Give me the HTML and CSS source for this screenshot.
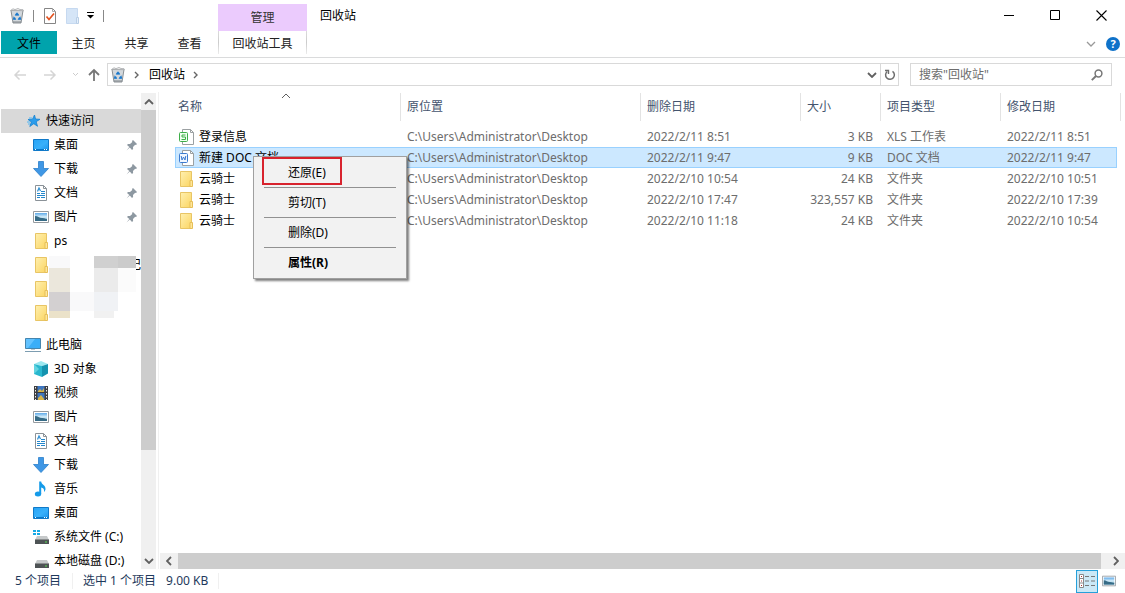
FILE: index.html
```html
<!DOCTYPE html>
<html lang="zh-CN">
<head>
<meta charset="utf-8">
<title>回收站</title>
<link rel="stylesheet" href="styles.css">
</head>
<body>
<svg class="sprite" aria-hidden="true">
  <defs>
    <linearGradient id="gFolder" x1="0" x2="1" y1="0" y2="1"><stop offset="0" stop-color="#fff0b0"/><stop offset="1" stop-color="#fbd562"/></linearGradient>
    <linearGradient id="gScreen" x1="0" x2="1" y1="0" y2="1"><stop offset="0" stop-color="#27a4f5"/><stop offset=".55" stop-color="#38b0fb"/><stop offset="1" stop-color="#1a94ec"/></linearGradient>
    <linearGradient id="gSky" x1="0" x2="0" y1="0" y2="1"><stop offset="0" stop-color="#5ea9e8"/><stop offset=".5" stop-color="#d8effa"/><stop offset="1" stop-color="#4f94b6"/></linearGradient>
    <symbol id="bin" viewBox="0 0 16 16"><path d="M2 2.500 4 15h8l2-12.500z" fill="#d3d8dc" stroke="#898f94"/><path d="M1.500 2.500 4 .8l2 .8 3-1.100 2 1 3 .2.5 1z" fill="#f1f1f1" stroke="#a4a7aa" stroke-width=".8"/><path d="M4 14h8" stroke="#7e8488"/><path d="M8 4.200 10.300 7.500H5.700zM4.700 8.200 7.300 11.800H3.800zM11.300 8.200 12.200 11.800H8.500z" fill="#1977cb"/><path d="m6.500 6.500 3 0M5 10.500l1.500 0M9.500 10.500h2" stroke="#1977cb" stroke-width="1.300"/></symbol>
    <symbol id="folder" viewBox="0 0 16 16"><path d="M2.500.5h11v15h-11z" fill="url(#gFolder)" stroke="#e8c565"/><path d="M12 9.500h2.500v6H12z" fill="#ffe69a" stroke="#e6bf58"/></symbol>
    <symbol id="star" viewBox="0 0 16 16"><path d="m9.500 2 1 4 4.500.3-3.800 2.400 1.300 4.600-3.700-2.600-4 2.800 1.600-4.600L3 6.500l4.500-.3z" fill="#2c9dec" stroke="#1683d1" stroke-width=".8"/><path d="M2 9h3M3 11h2M4 5h3" stroke="#53b6f4"/></symbol>
    <symbol id="desktop" viewBox="0 0 16 16"><path d="M.5 2.500h15v11H.5z" fill="url(#gScreen)" stroke="#1079c8"/><path d="M1 12.500h14" stroke="#0877c7"/><path d="M2 12.500h1M11 12.500h1M13 12.500h1" stroke="#fff"/></symbol>
    <symbol id="down" viewBox="0 0 16 16"><path d="M5.500.5h5v7h5L8 15.500.5 7.500h5z" fill="#3f97e5" stroke="#2b7fca" stroke-width=".8"/></symbol>
    <symbol id="doc" viewBox="0 0 16 16"><path d="M2.500.5h8l3 3v12h-11z" fill="#fff" stroke="#8b9298"/><path d="M10.500.5v3h3" fill="none" stroke="#8b9298"/><path d="m4.500 6.500 1.500-3.500 1.500 3" fill="none" stroke="#2e8fd3" stroke-width="1.200"/><path d="M8 6.500h4M4 8.500h3M8 8.500h4M4 10.500h8M4 12.500h3M8 12.500h4" stroke="#2387cc"/></symbol>
    <symbol id="picture" viewBox="0 0 16 16"><path d="M.5 2.500h15v11H.5z" fill="#fff" stroke="#969ca1"/><path d="M2 4h12v8H2z" fill="url(#gSky)"/><path d="M2 7c3 0 4 2 7 2s3 1 5 1v2H2z" fill="#366b86"/></symbol>
    <symbol id="pc" viewBox="0 0 16 16"><path d="M.5 1.500h15v10H.5z" fill="#3aaef8" stroke="#4585ae"/><path d="M1 2h9l-7 9H1z" fill="#62c2ff"/><path d="M6 12h4v1H6z" fill="#bac9d2"/><path d="M0 14.500h16" stroke="#7d9db1"/></symbol>
    <symbol id="cube" viewBox="0 0 16 16"><path d="m1 3 7-3 7 3-6 2z" fill="#9be8f0"/><path d="m1 3 8 2v11l-8-3z" fill="#28b7ce"/><path d="m9 5 6-2v9.500L9 16z" fill="#1493af"/><path d="m1 3 5 5-5 5z" fill="#62d4e0"/></symbol>
    <symbol id="film" viewBox="0 0 16 16"><path d="M1 1h14v14H1z" fill="#3e3e40"/><path d="M4.500 1h7v6h-7zM4.500 8h7v7h-7z" fill="#3e76c0"/><path d="m5 6 2-2 2 2 2-3v4H5zM5 13l3-3 3 4v1H5z" fill="#d9b548"/><path d="M2.500 2v13M13.500 2v13" stroke="#eee" stroke-dasharray="1.500 1.500"/></symbol>
    <symbol id="music" viewBox="0 0 16 16"><ellipse cx="5" cy="13" rx="3.200" ry="2.500" fill="#159be9"/><path d="M6.200 13V.5h2c0 3 4.800 3.500 4.300 8-.3 1-.8 2-1.500 2.500.5-3-.8-4-2.800-4.500V13z" fill="#159be9"/></symbol>
    <symbol id="drive" viewBox="0 0 16 16"><path d="m4 7-2 4h14l-2-4z" fill="#c6c9ca"/><path d="M2 10.500h14V15H2z" fill="#4e5355"/><path d="M12 13h2" stroke="#58e052"/></symbol>
    <symbol id="sysdrive" viewBox="0 0 16 16"><path d="m4 7-2 4h14l-2-4z" fill="#c6c9ca"/><path d="M2 10.500h14V15H2z" fill="#4e5355"/><path d="M0 1h3v2H0zM4 1h3v2H4zM0 4h3v2H0zM4 4h3v2H4z" fill="#16a9e5"/><path d="M12 13h2" stroke="#58e052"/></symbol>
    <symbol id="pin" viewBox="0 0 12 12"><path d="m7 1 4 4-1 1-.8-.2L7 8l.1 2L6 11 3.800 8.500.5 11.500 3.300 8 1 6l1-1 2 .1L6.300 3 6 2z" fill="#8d98a1"/></symbol>
    <symbol id="up" viewBox="0 0 10 6"><path d="m1 5 4-4 4 4" fill="none" stroke="currentColor" stroke-width="var(--weight, 1)"/></symbol>
    <symbol id="sheet" viewBox="0 0 16 16"><path d="M4.500.5h8l3 3v12h-11z" fill="#fff" stroke="#9ba0a2"/><path d="M12.500.5v3h3" fill="none" stroke="#9ba0a2"/><rect x="1.500" y="3.500" width="8" height="9" rx="1" fill="#f1fff1" stroke="#3eae49"/><path d="M7.500 6H4v2h3.500v2.500H3.500" fill="none" stroke="#3eae49"/></symbol>
    <symbol id="word" viewBox="0 0 16 16"><path d="M4.500.5h8l3 3v12h-11z" fill="#fff" stroke="#9ba0a2"/><path d="M12.500.5v3h3" fill="none" stroke="#9ba0a2"/><rect x="1.500" y="3.500" width="8" height="9" rx="1" fill="#f1f7ff" stroke="#3c7bd0"/><path d="m3.200 6 .8 4L5.500 7 7 10l.8-4" fill="none" stroke="#3c7bd0"/></symbol>
  </defs>
</svg>

<div class="window">
  <header>
    <div class="titlebar">
      <div class="quick">
        <svg class="icon"><use href="#bin"/></svg>
        <span class="divider"></span>
        <button aria-label="属性"><svg class="icon" viewBox="0 0 16 16"><path d="M2.500.5h8l3 3v12h-11z" fill="#fff" stroke="#858585"/><path d="M10.500.5v3h3" fill="none" stroke="#aaa"/><path d="m4.500 8.500 2.500 3 5-6" fill="none" stroke="#e35220" stroke-width="1.700"/></svg></button>
        <button aria-label="新建文件夹"><svg class="icon" viewBox="0 0 16 16"><path d="M2.500.5h11v15h-11z" fill="#d5e5f7" stroke="#c6d9f0"/><path d="M12.500 9.500h2v6h-2z" fill="#e5f0fb" stroke="#b9cee6"/></svg></button>
        <button class="customize" aria-label="自定义快速访问工具栏"><svg viewBox="0 0 9 7" width="9" height="7"><path d="M1 .5h7" stroke="#000"/><path d="M1 3h7L4.500 6.500z"/></svg></button>
        <span class="divider"></span>
      </div>
      <div class="context-group">管理</div>
      <div class="title">回收站</div>
      <div class="controls">
        <button aria-label="最小化"><svg viewBox="0 0 11 11" width="11" height="11"><path d="M0 5.500h10" stroke="#000"/></svg></button>
        <button aria-label="最大化"><svg viewBox="0 0 11 11" width="11" height="11"><path d="M.5.500h9v9h-9z" fill="none" stroke="#000"/></svg></button>
        <button aria-label="关闭"><svg viewBox="0 0 11 11" width="11" height="11"><path d="m.5.500 10 10M10.500.500l-10 10" stroke="#000" stroke-width="1.100"/></svg></button>
      </div>
    </div>
    <nav class="tabs" aria-label="功能区">
      <button class="tab file">文件</button>
      <button class="tab">主页</button>
      <button class="tab">共享</button>
      <button class="tab">查看</button>
      <button class="tab tools">回收站工具</button>
      <div class="ribbon-end">
        <button aria-label="展开功能区"><svg class="chev flip light"><use href="#up"/></svg></button>
        <button aria-label="帮助" class="help">?</button>
      </div>
    </nav>
  </header>

  <div class="navbar">
    <div class="history">
      <button aria-label="后退"><svg viewBox="0 0 14 12" width="14" height="12"><path d="M13 6H2M6.500 1.500 2 6l4.500 4.500" fill="none" stroke="#d5d5d5" stroke-width="1.500"/></svg></button>
      <button aria-label="前进"><svg viewBox="0 0 14 12" width="14" height="12"><path d="M0 6h11M6.500 1.500 11 6l-4.500 4.500" fill="none" stroke="#d5d5d5" stroke-width="1.500"/></svg></button>
      <button class="recent" aria-label="最近浏览的位置"><svg viewBox="0 0 7 5" width="7" height="5"><path d="m1 1 2.500 2.500L6 1" fill="none" stroke="#ccc"/></svg></button>
      <button aria-label="上移"><svg viewBox="0 0 12 14" width="12" height="14"><path d="M6 13V2M1 7l5-5 5 5" fill="none" stroke="#777" stroke-width="1.800"/></svg></button>
    </div>
    <div class="address">
      <svg class="icon"><use href="#bin"/></svg>
      <svg class="crumb-arrow" viewBox="0 0 5 8"><path d="m1 1 3 3-3 3" fill="none" stroke="#666" stroke-width="1.400"/></svg>
      <a href="#">回收站</a>
      <svg class="crumb-arrow" viewBox="0 0 5 8"><path d="m1 1 3 3-3 3" fill="none" stroke="#666" stroke-width="1.400"/></svg>
      <button class="drop" aria-label="上一个位置"><svg class="chev flip bold"><use href="#up"/></svg></button>
      <button class="refresh" aria-label="刷新"><svg viewBox="0 0 12 12" width="12" height="12"><path d="M8.500 2.300A4.400 4.400 0 1 1 3.200 2.500" fill="none" stroke="#6d6d6d" stroke-width="1.500"/><path d="M1 1.500h3.500V5" fill="none" stroke="#6d6d6d" stroke-width="1.400"/></svg></button>
    </div>
    <label class="search">
      <input type="text" placeholder="搜索&quot;回收站&quot;" aria-label="搜索">
      <svg viewBox="0 0 12 12" width="12" height="12"><circle cx="7.500" cy="4.500" r="3.400" fill="none" stroke="#777" stroke-width="1.500"/><path d="M5 7 .8 11.200" stroke="#777" stroke-width="1.900"/></svg>
    </label>
  </div>

  <main>
    <aside>
      <ul class="tree">
        <li class="root current"><svg class="icon"><use href="#star"/></svg>快速访问</li>
        <li><svg class="icon"><use href="#desktop"/></svg>桌面<svg class="pin"><use href="#pin"/></svg></li>
        <li><svg class="icon"><use href="#down"/></svg>下载<svg class="pin"><use href="#pin"/></svg></li>
        <li><svg class="icon"><use href="#doc"/></svg>文档<svg class="pin"><use href="#pin"/></svg></li>
        <li><svg class="icon"><use href="#picture"/></svg>图片<svg class="pin"><use href="#pin"/></svg></li>
        <li><svg class="icon"><use href="#folder"/></svg>ps</li>
        <li class="masked"><svg class="icon"><use href="#folder"/></svg><span class="tail">记</span>
          <svg class="mosaic" viewBox="0 0 87 62" width="87" height="62">
            <path d="M0 0h87v62H0z" fill="#fff"/>
            <path d="M0 0h21v12H0z" fill="#f9f9fa"/><path d="M0 12h21v24H0z" fill="#ebe7dc"/><path d="M0 36h21v19H0z" fill="#d3d0d1"/><path d="M0 55h21v7H0z" fill="#ebe2c9"/>
            <path d="M21 36h24v19H21z" fill="#f9f9fa"/><path d="M45 0h24v12H45z" fill="#d0d0d0"/><path d="M69 0h18v12H69z" fill="#cbcbcb"/><path d="M45 12h24v24H45z" fill="#ebebeb"/><path d="M69 12h18v24H69z" fill="#fbfbfb"/><path d="M45 36h24v19H45z" fill="#f0f2f5"/><path d="M45 55h20v7H45z" fill="#f1f1f1"/>
          </svg>
        </li>
        <li><svg class="icon"><use href="#folder"/></svg></li>
        <li><svg class="icon"><use href="#folder"/></svg></li>
        <li class="root computer"><svg class="icon"><use href="#pc"/></svg>此电脑</li>
        <li><svg class="icon"><use href="#cube"/></svg>3D 对象</li>
        <li><svg class="icon"><use href="#film"/></svg>视频</li>
        <li><svg class="icon"><use href="#picture"/></svg>图片</li>
        <li><svg class="icon"><use href="#doc"/></svg>文档</li>
        <li><svg class="icon"><use href="#down"/></svg>下载</li>
        <li><svg class="icon"><use href="#music"/></svg>音乐</li>
        <li><svg class="icon"><use href="#desktop"/></svg>桌面</li>
        <li><svg class="icon"><use href="#sysdrive"/></svg>系统文件 (C:)</li>
        <li><svg class="icon"><use href="#drive"/></svg>本地磁盘 (D:)</li>
      </ul>
      <div class="vscroll">
        <button aria-label="向上滚动"><svg class="chev bold"><use href="#up"/></svg></button>
        <div class="track"><div class="thumb"></div></div>
        <button aria-label="向下滚动"><svg class="chev flip bold"><use href="#up"/></svg></button>
      </div>
    </aside>

    <section class="pane">
      <div class="list">
        <table>
          <colgroup><col class="c-name"><col class="c-place"><col class="c-date"><col class="c-size"><col class="c-type"><col></colgroup>
          <thead>
            <tr><th>名称<svg class="chev sort"><use href="#up"/></svg></th><th>原位置</th><th>删除日期</th><th>大小</th><th>项目类型</th><th>修改日期</th></tr>
          </thead>
          <tbody>
            <tr><td><span class="name"><svg class="icon"><use href="#sheet"/></svg>登录信息</span></td><td>C:\Users\Administrator\Desktop</td><td>2022/2/11 8:51</td><td>3 KB</td><td>XLS 工作表</td><td>2022/2/11 8:51</td></tr>
            <tr class="selected"><td><span class="name"><svg class="icon"><use href="#word"/></svg>新建 DOC 文档</span></td><td>C:\Users\Administrator\Desktop</td><td>2022/2/11 9:47</td><td>9 KB</td><td>DOC 文档</td><td>2022/2/11 9:47</td></tr>
            <tr><td><span class="name"><svg class="icon"><use href="#folder"/></svg>云骑士</span></td><td>C:\Users\Administrator\Desktop</td><td>2022/2/10 10:54</td><td>24 KB</td><td>文件夹</td><td>2022/2/10 10:51</td></tr>
            <tr><td><span class="name"><svg class="icon"><use href="#folder"/></svg>云骑士</span></td><td>C:\Users\Administrator\Desktop</td><td>2022/2/10 17:47</td><td>323,557 KB</td><td>文件夹</td><td>2022/2/10 17:39</td></tr>
            <tr><td><span class="name"><svg class="icon"><use href="#folder"/></svg>云骑士</span></td><td>C:\Users\Administrator\Desktop</td><td>2022/2/10 11:18</td><td>24 KB</td><td>文件夹</td><td>2022/2/10 10:54</td></tr>
          </tbody>
        </table>
        <div class="menu" role="menu">
          <button role="menuitem" class="marked">还原(E)</button>
          <hr>
          <button role="menuitem">剪切(T)</button>
          <hr>
          <button role="menuitem">删除(D)</button>
          <hr>
          <button role="menuitem" class="default">属性(R)</button>
        </div>
      </div>
      <div class="hscroll">
        <button aria-label="向左滚动"><svg class="chev left bold"><use href="#up"/></svg></button>
        <div class="thumb"></div>
        <button aria-label="向右滚动"><svg class="chev right bold"><use href="#up"/></svg></button>
      </div>
    </section>
  </main>

  <footer>
    <span class="count">5 个项目</span>
    <span class="picked">选中 1 个项目</span>
    <span class="bytes">9.00 KB</span>
    <div class="views">
      <button class="on" aria-label="详细信息"><svg viewBox="0 0 16 14" width="16" height="14"><path d="M.5.500h4v13h-4zM.5 4.500h4M.5 9h4" fill="#fff" stroke="#888"/><path d="M2 2.500h1M2 7h1M2 11.500h1" stroke="#a33"/><path d="M6 2.500h4M12 2.500h4M6 7h4M12 7h4M6 11.500h4M12 11.500h4" stroke="#777"/></svg></button>
      <button aria-label="大缩略图"><svg viewBox="0 0 16 16" width="14" height="14"><use href="#picture"/></svg></button>
    </div>
  </footer>
</div>
</body>
</html>
```

FILE: styles.css
```css
*,
*::before,
*::after { box-sizing: border-box; }

body {
  margin: 0;
  background: #fff;
  color: #000;
  font: 12px/16px "Noto Sans", "Noto Sans CJK SC", sans-serif;
}

button {
  display: flex;
  align-items: center;
  justify-content: center;
  padding: 0;
  border: 0;
  background: none;
  color: inherit;
  font: inherit;
}

svg { display: block; flex: none; }
.sprite { position: absolute; width: 0; height: 0; }
.icon { width: 16px; height: 16px; }

.chev { width: 10px; height: 6px; color: #606060; }
.flip { transform: rotate(180deg); }
.left { transform: rotate(-90deg); }
.right { transform: rotate(90deg); }
.bold { --weight: 1.8; }
.light { --weight: 1.3; color: #999; }

.window {
  display: flex;
  flex-direction: column;
  height: 100vh;
  overflow: hidden;
}

/* Title bar and ribbon tabs */
.titlebar { display: flex; height: 31px; }

.quick {
  display: flex;
  align-items: center;
  gap: 8px;
  width: 218px;
  padding-left: 9px;
}

.divider { width: 1px; height: 12px; background: #888; }
.quick button + button { margin-left: -2px; }
.quick .customize { width: 9px; }

.context-group {
  display: flex;
  align-items: center;
  justify-content: center;
  width: 89px;
  margin-top: 4px;
  background: #ebcbfd;
  color: #333;
}

.title { flex: 1; padding: 8px 13px; }
.controls { display: flex; padding-right: 1px; }
.controls button { width: 46px; }

.tabs {
  display: flex;
  height: 27px;
  padding-left: 1px;
  border-bottom: 1px solid #dadbdc;
}

.tab { width: 53px; height: 23px; padding-top: 2px; color: #222; }
.file { width: 56px; background: #00a3ac; color: #000; }

.tools {
  width: 89px;
  margin-left: 2px;
  border: 1px solid;
  border-width: 0 1px;
  border-image: linear-gradient(#ddd, #ccc, #eee) 1;
}

.ribbon-end {
  display: flex;
  align-items: center;
  gap: 10px;
  margin-left: auto;
  padding-right: 5px;
}

.help {
  width: 14px;
  height: 14px;
  border-radius: 50%;
  background: #0f72c9;
  color: #fff;
  font-size: 11px;
  font-weight: bold;
}

/* Address bar */
.navbar { display: flex; padding: 5px 13px 6px 0; }

.history {
  display: flex;
  align-items: center;
  justify-content: space-between;
  width: 107px;
  padding: 0 7px 0 13px;
}

.history button:nth-child(2) { margin-left: 8px; }
.history .recent { margin-left: 4px; }

.address {
  display: flex;
  align-items: center;
  flex: 1;
  height: 23px;
  border: 1px solid #d9d9d9;
  padding-left: 2px;
}

.address a { color: #000; text-decoration: none; }
.crumb-arrow { width: 5px; height: 8px; margin: 0 10px 0 8px; }
.drop { width: 17px; margin-left: auto; }
.refresh { width: 18px; height: 100%; border-left: 1px solid #d9d9d9; }

.search {
  display: flex;
  align-items: center;
  width: 202px;
  height: 23px;
  margin-left: 11px;
  padding: 0 8px;
  border: 1px solid #d9d9d9;
}

.search input {
  flex: 1;
  min-width: 0;
  padding: 0;
  border: 0;
  outline: 0;
  color: #666;
  font: inherit;
}

.search input::placeholder { color: #6d6d6d; opacity: 1; }

/* Body */
main { display: flex; flex: 1; min-height: 0; }

aside {
  display: flex;
  width: 159px;
  padding-top: 1px;
  border-right: 1px solid #f0f0f0;
}

.tree {
  flex: 1;
  margin: 0;
  padding: 16px 0 0 1px;
  overflow: hidden;
  list-style: none;
}

.tree li {
  display: flex;
  align-items: center;
  gap: 5px;
  height: 24px;
  padding-left: 32px;
  white-space: nowrap;
}

.tree .root { padding-left: 24px; }
.tree .current { background: #d9d9d9; }
.tree .computer { margin-top: 8px; }
.pin { width: 12px; height: 12px; margin: 0 3px 0 auto; }
.masked { position: relative; }
.tail { margin-left: auto; }
.mosaic { position: absolute; top: 3px; left: 48px; }

.vscroll {
  display: flex;
  flex-direction: column;
  width: 15px;
  margin-right: 2px;
  background: #f0f0f0;
}

.vscroll button { height: 17px; }
.track { flex: 1; }
.vscroll .thumb { height: 77%; background: #cdcdcd; }

.pane { display: flex; flex: 1; flex-direction: column; min-width: 0; }
.list { position: relative; flex: 1; padding: 1px 8px 0 16px; }

table {
  width: 100%;
  border-collapse: separate;
  border-spacing: 0;
  table-layout: fixed;
}

.c-name { width: 226px; }
.c-place { width: 240px; }
.c-date { width: 160px; }
.c-size { width: 80px; }
.c-type { width: 120px; }

th {
  position: relative;
  height: 28px;
  padding: 0 6px;
  border-right: 1px solid #e3e3e3;
  color: #43536d;
  font-weight: normal;
  text-align: left;
}

th:first-child { padding-left: 3px; }
th:last-child { border-right: 0; }

th:last-child::after {
  content: "";
  position: absolute;
  top: 0;
  right: -4px;
  width: 1px;
  height: 100%;
  background: #e3e3e3;
}

.sort { position: absolute; top: 0; left: 106px; }

tbody::before { content: ""; display: block; height: 5px; }

td {
  height: 21px;
  padding: 0 6px;
  border: 1px solid transparent;
  border-width: 1px 0;
  color: #6d6d6d;
  white-space: nowrap;
}

td:first-child { padding: 0 3px; color: #000; }
td:nth-child(4) { padding-right: 8px; text-align: right; }
.name { display: flex; align-items: center; gap: 5px; }

.selected td { border-color: #99d1ff; background: #cce8ff; }
.selected td:first-child { border-left: 1px solid #99d1ff; padding-left: 2px; }
.selected td:last-child { border-right: 1px solid #99d1ff; }

/* Context menu */
.menu {
  position: absolute;
  top: 64px;
  left: 94px;
  width: 154px;
  padding: 1px 10px;
  border: 1px solid #a0a0a0;
  background: #f2f2f2;
  box-shadow: 2px 2px 2px rgba(0, 0, 0, .5);
}

.menu button {
  position: relative;
  justify-content: flex-start;
  width: 100%;
  height: 29px;
  padding-left: 24px;
}

.menu hr { height: 1px; margin: 0; border: 0; background: #919191; }
.menu .default { font-weight: bold; }

.marked::after {
  content: "";
  position: absolute;
  top: -1px;
  left: -2px;
  width: 80px;
  height: 28px;
  border: 2px solid #d8232e;
}

.hscroll { display: flex; height: 16px; margin-left: 1px; background: #f0f0f0; }
.hscroll button { width: 18px; }
.hscroll .thumb { flex: 1; margin-right: 6px; background: #cdcdcd; }

/* Status bar */
footer {
  display: flex;
  align-items: center;
  height: 24px;
  padding: 0 5px 0 15px;
  color: #1e395b;
}

.picked { margin-left: 11px; padding-left: 10px; border-left: 1px solid #f0f0f0; }
.bytes { margin-left: 10px; padding-right: 10px; border-right: 1px solid #f0f0f0; }
.views { display: flex; margin-left: auto; }
.views button { width: 22px; height: 23px; }
.views .on { border: 1px solid #26a0da; background: #cbe8f6; }
```
